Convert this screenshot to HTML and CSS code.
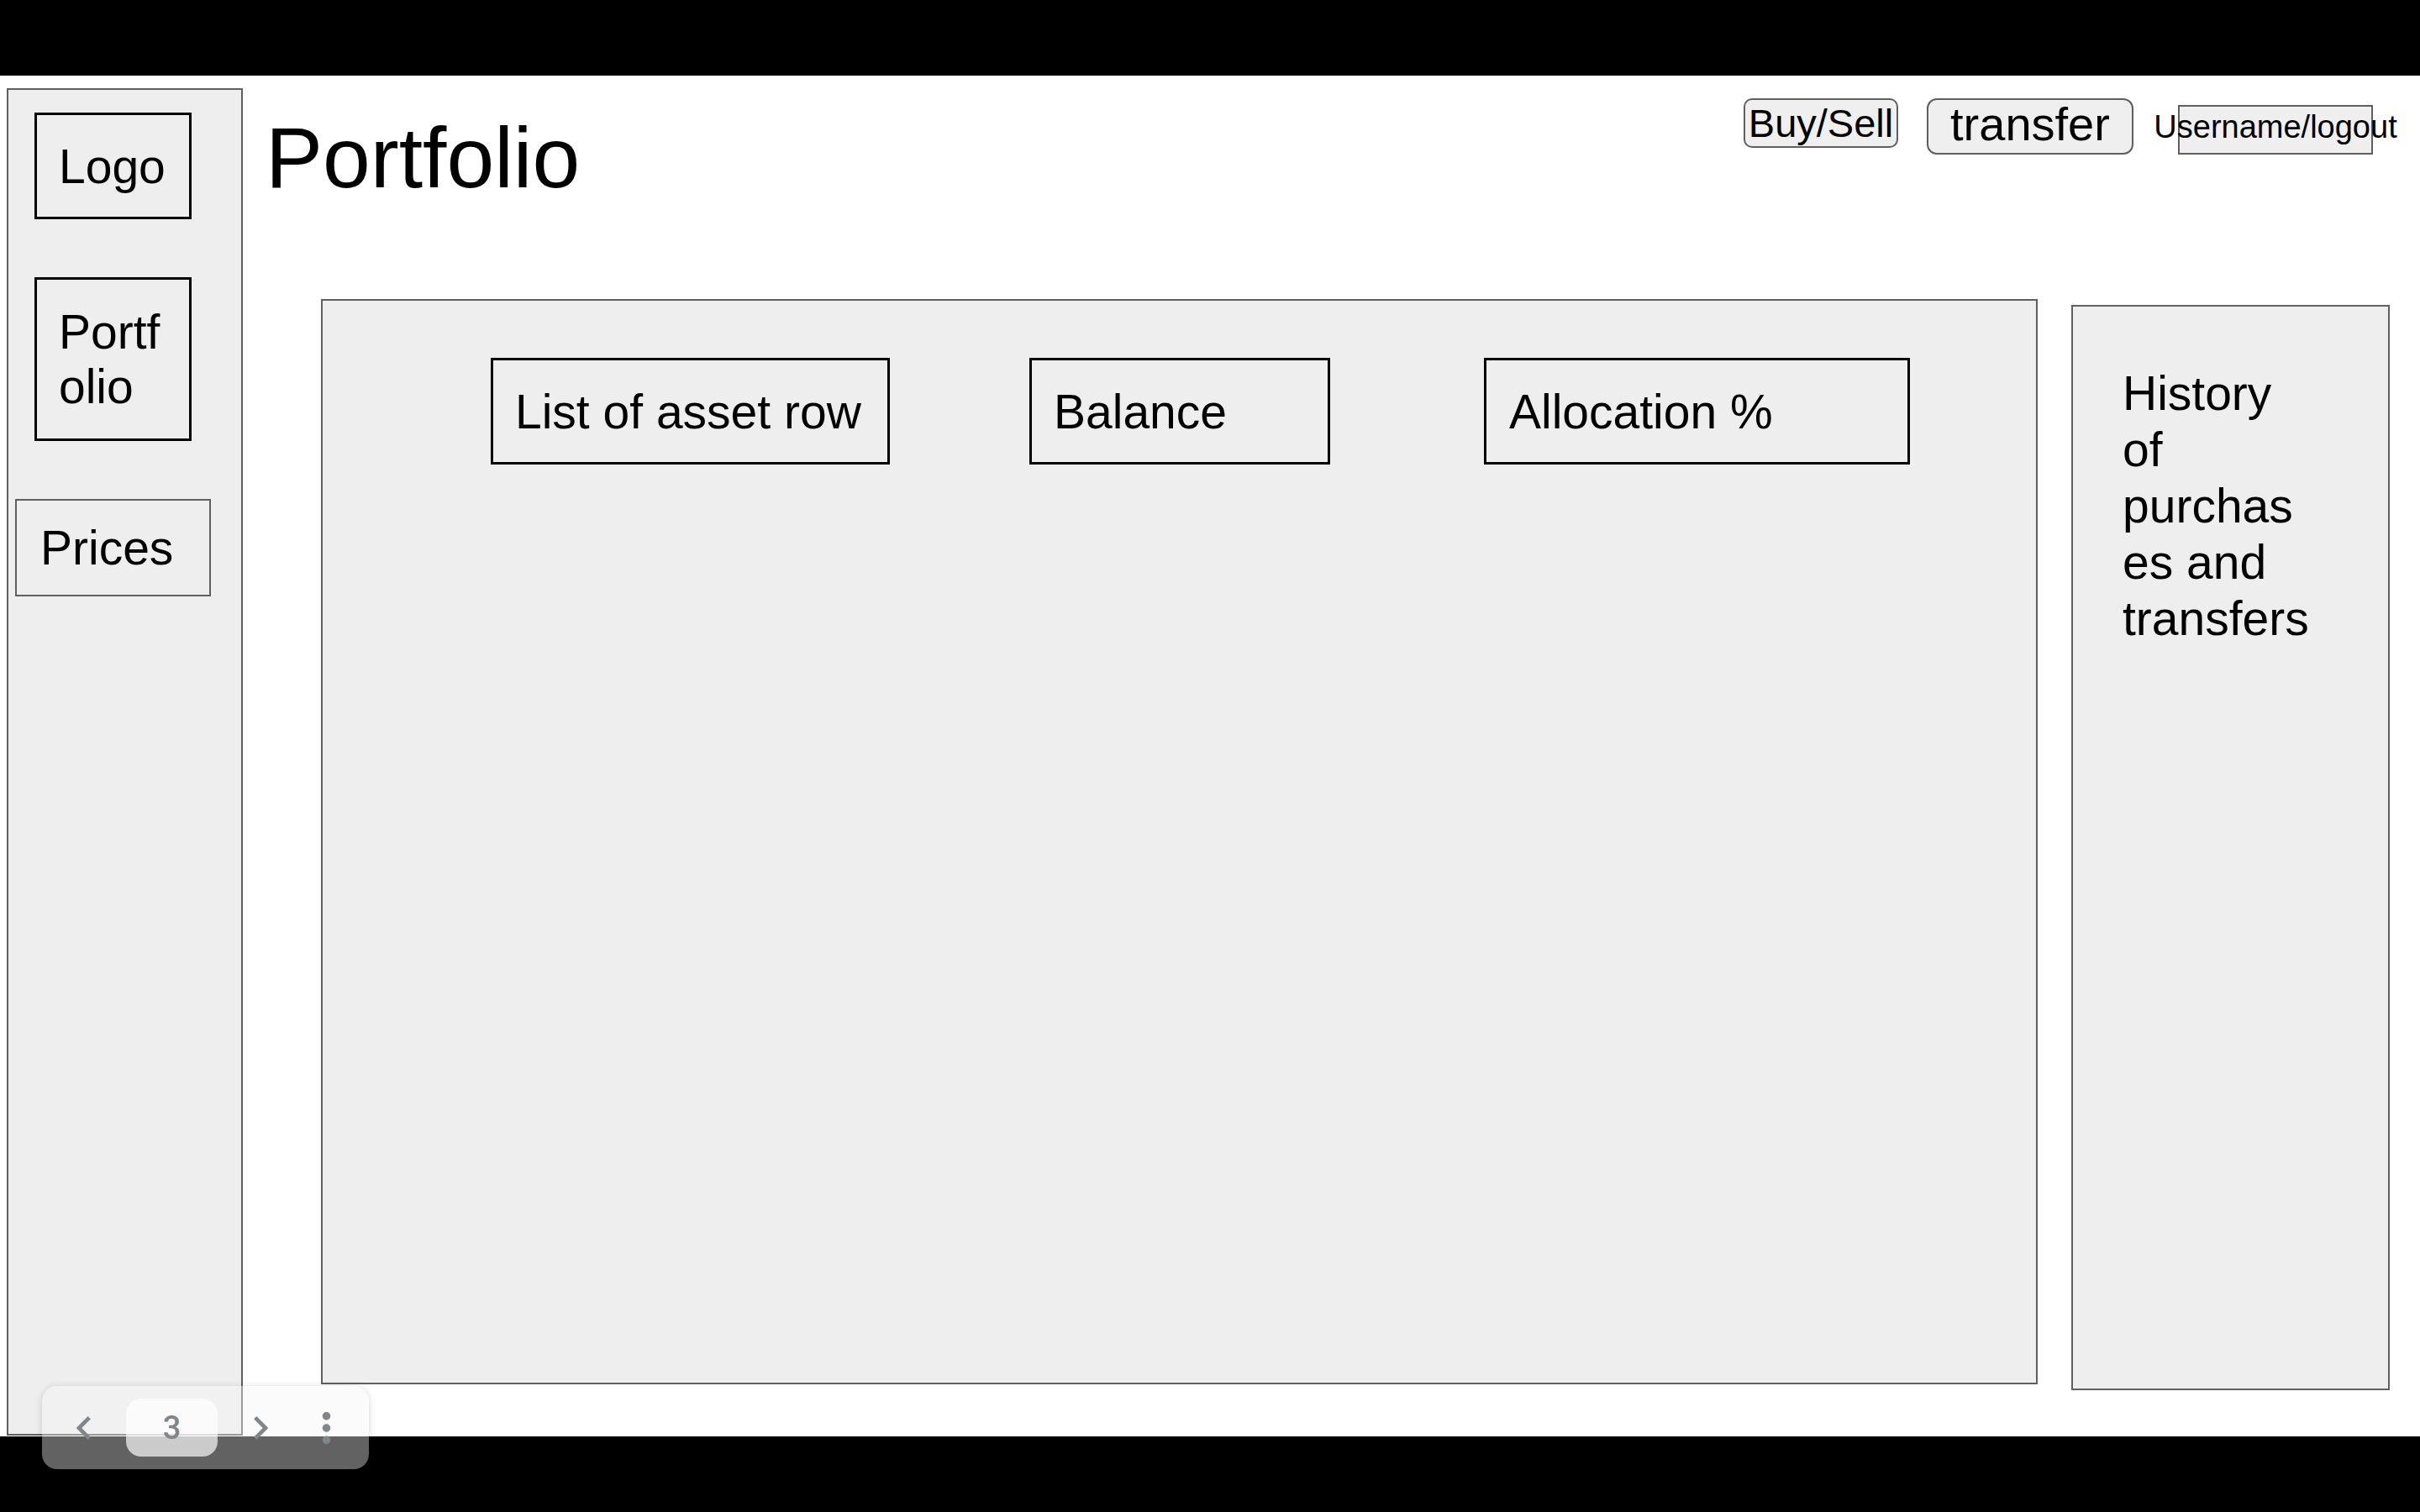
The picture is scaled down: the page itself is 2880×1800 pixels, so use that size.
FILE: index.html
```html
<!DOCTYPE html>
<html lang="en">
<head>
<meta charset="utf-8">
<title>Portfolio wireframe</title>
<link rel="stylesheet" href="styles.css">
</head>
<body>
<div class="slide">
  <aside class="sidebar">
    <div class="nav-box logo">Logo</div>
    <div class="nav-box portfolio"><span class="wrap-text">Portfolio</span></div>
    <div class="nav-box prices">Prices</div>
  </aside>
  <div class="content">
    <header class="header">
      <h1 class="title">Portfolio</h1>
      <div class="actions">
        <div class="btn buysell">Buy/Sell</div>
        <div class="btn transfer">transfer</div>
        <div class="user"><span>Username/logout</span></div>
      </div>
    </header>
    <div class="panels">
      <section class="main-panel">
        <div class="cell list">List of asset row</div>
        <div class="cell balance">Balance</div>
        <div class="cell alloc">Allocation %</div>
      </section>
      <section class="history">
        <p class="history-text">History of purchases and transfers</p>
      </section>
    </div>
  </div>
</div>
<div class="pager">
  <div class="slot prev">
    <svg class="chev" viewBox="0 0 24 24" width="56" height="56"><path d="M15.41 7.41L14 6l-6 6 6 6 1.41-1.41L10.83 12z"/></svg>
  </div>
  <div class="page-pill">3</div>
  <div class="slot next">
    <svg class="chev" viewBox="0 0 24 24" width="56" height="56"><path d="M10 6L8.59 7.41 13.17 12l-4.58 4.59L10 18l6-6z"/></svg>
  </div>
  <div class="slot more">
    <svg class="chev" viewBox="0 0 24 24" width="60" height="60"><path d="M12 8c1.1 0 2-.9 2-2s-.9-2-2-2-2 .9-2 2 .9 2 2 2zm0 2c-1.1 0-2 .9-2 2s.9 2 2 2 2-.9 2-2-.9-2-2-2zm0 6c-1.1 0-2 .9-2 2s.9 2 2 2 2-.9 2-2-.9-2-2-2z"/></svg>
  </div>
</div>
</body>
</html>
```
FILE: styles.css
```css
html, body {
  margin: 0;
  padding: 0;
}
body {
  background: #000;
  width: 2880px;
  height: 1800px;
  overflow: hidden;
  font-family: "Liberation Sans", Arial, sans-serif;
  color: #000;
  position: relative;
}
.slide {
  margin-top: 90px;
  width: 2880px;
  height: 1620px;
  background: #fff;
  display: flex;
  align-items: flex-start;
  overflow: hidden;
}
.sidebar {
  flex: 0 0 auto;
  box-sizing: border-box;
  width: 281px;
  height: 1604px;
  margin: 15px 0 0 8px;
  background: #eeeeee;
  border: 2px solid #5f5f5f;
  display: flex;
  flex-direction: column;
  align-items: flex-start;
  padding-top: 27px;
}
.nav-box {
  box-sizing: border-box;
  display: flex;
  align-items: center;
  font-size: 57px;
  border: 3px solid #000;
  white-space: nowrap;
}
.logo {
  width: 187px;
  height: 127px;
  margin-left: 31px;
  padding-left: 26px;
}
.portfolio {
  width: 187px;
  height: 195px;
  margin-top: 69px;
  margin-left: 31px;
  padding-left: 26px;
  line-height: 65px;
  white-space: normal;
}
.wrap-text {
  width: 135px;
  overflow-wrap: anywhere;
}
.prices {
  width: 233px;
  height: 116px;
  margin-top: 69px;
  margin-left: 8px;
  border: 2px solid #5f5f5f;
  padding-left: 28px;
}
.content {
  flex: 1;
  min-width: 0;
  display: flex;
  flex-direction: column;
}
.header {
  box-sizing: border-box;
  height: 266px;
  display: flex;
  align-items: flex-start;
  padding: 0 56px 0 27px;
}
.title {
  margin: 47px 0 0;
  font-size: 102px;
  line-height: 1;
  font-weight: normal;
}
.actions {
  margin-left: auto;
  margin-top: 27px;
  display: flex;
  align-items: flex-start;
}
.btn {
  box-sizing: border-box;
  display: flex;
  align-items: center;
  justify-content: center;
  background: #efefef;
  border: 2px solid #5f5f5f;
  white-space: nowrap;
}
.buysell {
  width: 184px;
  height: 59px;
  border-radius: 10px;
  font-size: 47px;
}
.transfer {
  width: 246px;
  height: 67px;
  margin-left: 34px;
  border-radius: 12px;
  font-size: 56px;
  padding-bottom: 6px;
}
.user {
  box-sizing: border-box;
  width: 232px;
  height: 59px;
  margin-left: 53px;
  margin-top: 8px;
  border: 2px solid #5f5f5f;
  background: #efefef;
  display: flex;
  align-items: center;
  justify-content: center;
  font-size: 38px;
  white-space: nowrap;
  padding-bottom: 7px;
}
.panels {
  display: flex;
  align-items: flex-start;
  padding-left: 93px;
}
.main-panel {
  box-sizing: border-box;
  width: 2043px;
  height: 1292px;
  background: #eeeeee;
  border: 2px solid #5f5f5f;
  display: flex;
  align-items: flex-start;
  padding: 68px 0 0 200px;
}
.cell {
  box-sizing: border-box;
  height: 127px;
  border: 3px solid #000;
  display: flex;
  align-items: center;
  font-size: 57px;
  white-space: nowrap;
  padding-left: 26px;
}
.list {
  width: 475px;
}
.balance {
  width: 358px;
  margin-left: 166px;
}
.alloc {
  width: 507px;
  margin-left: 183px;
  padding-left: 27px;
}
.history {
  box-sizing: border-box;
  width: 379px;
  height: 1292px;
  margin-left: 40px;
  margin-top: 7px;
  background: #eeeeee;
  border: 2px solid #5f5f5f;
  padding: 70px 0 0 59px;
}
.history-text {
  margin: 0;
  width: 228px;
  font-size: 57px;
  line-height: 67px;
  overflow-wrap: anywhere;
}
.pager {
  position: absolute;
  left: 50px;
  top: 1650px;
  width: 389px;
  height: 99px;
  border-radius: 18px;
  background: rgba(245, 245, 245, 0.4);
  box-shadow: 0 1px 8px rgba(0, 0, 0, 0.16);
  display: flex;
  align-items: center;
}
.slot {
  display: flex;
  align-items: center;
  justify-content: center;
}
.prev {
  width: 100px;
}
.next {
  width: 101px;
}
.more {
  width: 57px;
}
.chev {
  fill: #80868b;
  display: block;
}
.page-pill {
  width: 109px;
  height: 69px;
  border-radius: 18px;
  background: rgba(255, 255, 255, 0.67);
  display: flex;
  align-items: center;
  justify-content: center;
  font-family: Roboto, "Liberation Sans", sans-serif;
  font-weight: 500;
  font-size: 38px;
  color: #80868b;
}
```
